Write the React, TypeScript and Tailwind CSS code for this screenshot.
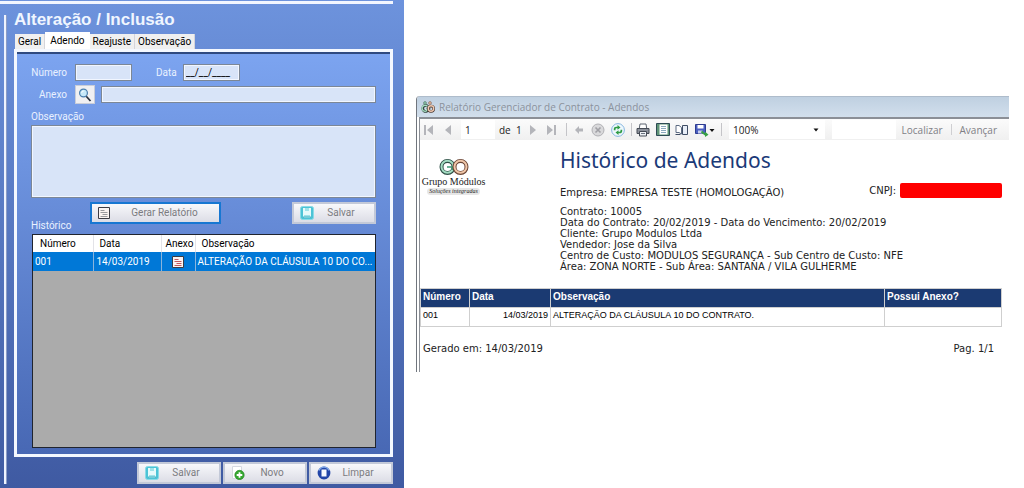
import type { ReactNode } from 'react';

const tabs = ['Geral', 'Adendo', 'Reajuste', 'Observação'];

const contractLines = [
  'Contrato: 10005',
  'Data do Contrato: 20/02/2019 - Data do Vencimento: 20/02/2019',
  'Cliente: Grupo Modulos Ltda',
  'Vendedor: Jose da Silva',
  'Centro de Custo: MODULOS SEGURANÇA - Sub Centro de Custo: NFE',
  'Área: ZONA NORTE - Sub Área: SANTANA / VILA GULHERME',
];

const SaveIcon = () => (
  <svg viewBox="0 0 14 14" className="size-3.5">
    <rect x="0.5" y="0.5" width="13" height="13" rx="2" fill="#4cc3d6" stroke="#8adbe6" />
    <path d="M3 2h8v9H3z" fill="#e6fafb" />
    <path d="M5 2h4v3H5zM4 9h6v3H4z" fill="#9fe3ea" />
    <path d="M3 11h8" stroke="#4fb4c6" />
  </svg>
);

const NewIcon = () => (
  <svg viewBox="0 0 14 14" className="size-3.5">
    <path d="M1.5 0.5h9v12h-9z" fill="#fff" stroke="#d5d8e0" />
    <circle cx="8.5" cy="9" r="4.7" fill="#35a82f" stroke="#1d7d1c" strokeWidth="0.6" />
    <path d="M8.5 6.2v5.6M5.7 9h5.6" stroke="#fff" strokeWidth="1.8" />
  </svg>
);

const ClearIcon = () => (
  <svg viewBox="0 0 14 14" className="size-3.5">
    <circle cx="7" cy="7" r="5.2" fill="#2346a8" stroke="#2346a8" strokeWidth="2.4" />
    <path d="M2 4.500a5.4 5.4 0 0 1 10 0" fill="none" stroke="#7fa8e8" strokeWidth="1.4" />
    <path d="M4.5 3.500h5v7h-5z" fill="#f7faff" />
  </svg>
);

const NoteIcon = ({ color }: { color: string }) => (
  <svg viewBox="0 0 12 12" className="size-3">
    <path d="M0.5 0.5h11v11H0.5z" fill="#fbf4f2" stroke="#3c3c44" />
    <path d="M2.5 3.5h4M2.5 5.5h7M4.5 7.5h5M2.5 9.5h7" stroke={color} />
  </svg>
);

const SearchIcon = () => (
  <svg viewBox="0 0 14 14" className="size-3.5">
    <path d="M8 8l4.5 5" stroke="#2b3340" strokeWidth="1.8" />
    <circle cx="5.5" cy="5" r="3.9" fill="#c6e9fa" stroke="#4b7fae" strokeWidth="1.2" />
    <path d="M3.7 4.8a2 2 0 0 1 2-1.8" fill="none" stroke="#fff" />
  </svg>
);

const Rings = () => (
  <svg viewBox="0 0 30 18" className="h-[18px] w-[30px]">
    <circle cx="8.5" cy="9" r="6" fill="none" stroke="#2f4f46" strokeWidth="4" />
    <circle cx="8.5" cy="8.8" r="6" fill="none" stroke="#a3dcc2" strokeWidth="2" />
    <path d="M8 9h5.500v3" fill="none" stroke="#3f9a74" strokeWidth="1.6" />
    <circle cx="21.5" cy="9" r="6" fill="none" stroke="#6b4636" strokeWidth="4" />
    <circle cx="21.5" cy="8.8" r="6" fill="none" stroke="#f0c6a8" strokeWidth="2" />
  </svg>
);

const WindowIcon = () => (
  <svg viewBox="0 0 14 12" className="h-3 w-3.5">
    <path d="M7 5.500a3 3 0 1 0 .3 3.500H5" fill="none" stroke="#33453f" strokeWidth="2.800" />
    <path d="M6.500 5.500a3 3 0 1 0 .3 3H5" fill="none" stroke="#a5dcc0" strokeWidth="1.400" />
    <circle cx="10" cy="7.800" r="2.700" fill="none" stroke="#4a3830" strokeWidth="2.600" />
    <circle cx="10" cy="7.500" r="2.700" fill="none" stroke="#f0c8b0" strokeWidth="1.400" />
    <circle cx="4" cy="2" r="1.400" fill="#8fcdb0" stroke="#4d6b60" strokeWidth="0.600" />
    <circle cx="9" cy="2" r="1.400" fill="#ecc0a4" stroke="#75594b" strokeWidth="0.600" />
  </svg>
);

type ActionButtonProps = { icon: ReactNode; label: string; className?: string };

const ActionButton = ({ icon, label, className = 'w-[84px] border-2 border-[#c3c9d8] pr-1.5' }: ActionButtonProps) => (
  <button
    type="button"
    className={`flex h-[22px] items-center bg-gradient-to-b from-[#f8f8fb] to-[#dcdde6] pl-1.5 text-[#7b7b80] ${className}`}
  >
    {icon}
    <span className="flex-1 text-center">{label}</span>
  </button>
);

const fieldClass = 'border border-[#7c8796] bg-[#d8e4f8] outline-1 -outline-offset-2 outline-[#f1f6ff]';

const AddendumForm = () => (
  <section className="flex min-w-0 flex-col bg-gradient-to-b from-[#6d93dd] to-[#3f5aa2] font-[Roboto,sans-serif] text-[10px] leading-[14px] text-[#e9f1ff]">
    <div className="mt-px mr-[11px] h-[3px] bg-[#f2f6ff]" />
    <div className="flex flex-1 pb-1">
      <div className="mt-[11px] ml-1 w-[3px] shrink-0 border-r border-[#8c9cc4] bg-[#eef3ff]" />
      <div className="flex min-w-0 flex-1 flex-col pr-[11px] pl-[7px]">
        <h1 className="mt-1.5 font-['Liberation_Sans',sans-serif] text-[17px] leading-5 font-bold text-[#f0f6ff]">
          Alteração / Inclusão
        </h1>

        <div role="tablist" className="mt-0.5 ml-px flex items-end text-black">
          {tabs.map((tab) => (
            <button
              key={tab}
              type="button"
              role="tab"
              aria-selected={tab === 'Adendo'}
              className={
                tab === 'Adendo'
                  ? 'h-[17px] bg-white px-[5px]'
                  : 'h-[15px] border-r border-[#d5d5da] bg-[#f0f0f0] px-[3px]'
              }
            >
              {tab}
            </button>
          ))}
        </div>

        <div className="flex flex-1 flex-col border-[3px] border-[#f4f8ff]">
          <div className="flex flex-1 flex-col border-t-2 border-[#2f4a80] bg-gradient-to-b from-[#7ca4f0] to-[#4868b4] px-[14px] pt-2.5 pb-1.5">
            <div className="flex items-center">
              <label htmlFor="numero" className="w-9 text-right">Número</label>
              <input id="numero" className={`ml-2 h-[17px] w-[57px] ${fieldClass}`} />
              <label htmlFor="data" className="ml-6">Data</label>
              <input
                id="data"
                defaultValue="__/__/____"
                className={`ml-1.5 h-[17px] w-[57px] pl-0.5 text-black ${fieldClass}`}
              />
            </div>

            <div className="mt-1 flex items-center">
              <label htmlFor="anexo" className="w-9 text-right">Anexo</label>
              <button
                type="button"
                aria-label="Procurar anexo"
                className="ml-2 flex h-[19px] w-5 items-center justify-center border border-[#c9cdd8] bg-[#f0f0f2]"
              >
                <SearchIcon />
              </button>
              <input id="anexo" className={`ml-1.5 h-[17px] min-w-0 flex-1 ${fieldClass}`} />
            </div>

            <label htmlFor="observacao" className="mt-1.5">Observação</label>
            <textarea id="observacao" className={`mt-px h-[73px] resize-none ${fieldClass}`} />

            <div className="mt-1 flex h-[31px] items-start">
              <h2 className="w-[59px] self-end">Histórico</h2>
              <ActionButton
                icon={<NoteIcon color="#9a9a9e" />}
                label="Gerar Relatório"
                className="w-[131px] border-2 border-[#1777d2]"
              />
              <div className="ml-auto">
                <ActionButton icon={<SaveIcon />} label="Salvar" />
              </div>
            </div>

            <div className="mt-px ml-px flex-1 border border-[#20242e] bg-[#ababab]">
              <table className="w-full table-fixed border-collapse text-left">
                <colgroup>
                  <col className="w-[60px]" />
                  <col className="w-[68px]" />
                  <col className="w-[34px]" />
                  <col />
                </colgroup>
                <thead>
                  <tr className="h-[17px] bg-white text-black">
                    <th className="border-r border-[#e3e3e8] pl-[7px] font-normal">Número</th>
                    <th className="border-r border-[#e3e3e8] pl-1.5 font-normal">Data</th>
                    <th className="border-r border-[#e3e3e8] pl-1 font-normal">Anexo</th>
                    <th className="pl-1.5 font-normal">Observação</th>
                  </tr>
                </thead>
                <tbody>
                  <tr className="h-[19px] bg-[#0078d7] text-white">
                    <td className="border-r border-[#8ab4dc] pl-0.5">001</td>
                    <td className="border-r border-[#8ab4dc] pl-[3px]">14/03/2019</td>
                    <td className="border-r border-[#8ab4dc]">
                      <div className="flex justify-center"><NoteIcon color="#c4585c" /></div>
                    </td>
                    <td className="pl-0.5 whitespace-nowrap">ALTERAÇÃO DA CLÁUSULA 10 DO CO...</td>
                  </tr>
                </tbody>
              </table>
            </div>
          </div>
        </div>

        <div className="mt-[5px] flex justify-end gap-0.5">
          <ActionButton icon={<SaveIcon />} label="Salvar" />
          <ActionButton icon={<NewIcon />} label="Novo" />
          <ActionButton icon={<ClearIcon />} label="Limpar" />
        </div>
      </div>
    </div>
  </section>
);

const navIcons = {
  first: 'M1 1h2v10H1zM10 1v10L4 6z',
  prev: 'M8 1v10L2 6z',
  next: 'M3 1v10l6-5z',
  last: 'M1 1v10l6-5zM8 1h2v10H8z',
  back: 'M2 6l4-4v2.5h4v3H6V10z',
};

const NavButton = ({ label, icon, className }: { label: string; icon: keyof typeof navIcons; className: string }) => (
  <button type="button" aria-label={label} className={className}>
    <svg viewBox="0 0 12 12" className="size-3">
      <path d={navIcons[icon]} fill="#b4b5ba" />
    </svg>
  </button>
);

const ReportToolbar = () => (
  <div className="flex h-[21px] items-center bg-gradient-to-b from-[#fbfbfb] to-[#f0f0f0] pl-[3px] font-['Open_Sans',sans-serif] text-[10px] leading-[14px] text-[#222]">
    <NavButton label="Primeira página" icon="first" className="" />
    <NavButton label="Página anterior" icon="prev" className="ml-2" />
    <input aria-label="Página" defaultValue="1" className="ml-1.5 h-[19px] w-[34px] bg-white pl-1" />
    <span className="ml-1 w-[24px] whitespace-nowrap">de&nbsp; 1</span>
    <NavButton label="Próxima página" icon="next" className="ml-1" />
    <NavButton label="Última página" icon="last" className="ml-[7px]" />
    <span className="ml-2 h-[13px] w-px bg-[#c4c4c8]" />
    <NavButton label="Voltar" icon="back" className="ml-1.5" />
    <button type="button" aria-label="Parar" className="ml-1.5">
      <svg viewBox="0 0 14 14" className="size-3.5">
        <circle cx="7" cy="7" r="6" fill="#d9d9db" stroke="#b0b0b4" />
        <path d="M4.5 4.5l5 5M9.5 4.5l-5 5" stroke="#a0a0a5" strokeWidth="1.6" />
      </svg>
    </button>
    <button type="button" aria-label="Atualizar" className="ml-1.5">
      <svg viewBox="0 0 14 14" className="size-3.5">
        <circle cx="7" cy="7" r="6.4" fill="#eef7fd" stroke="#86b6df" />
        <path d="M2.800 7.200V6c0-1.500 1-2.300 2.400-2.300h1.300V2l3 2.400-3 2.400V5.300H5.400c-.6 0-.9.300-.9.900v1z" fill="#2f9c45" />
        <path d="M11.200 6.800V8c0 1.500-1 2.300-2.400 2.300H7.500V12l-3-2.400 3-2.400v1.500h1.100c.6 0 .9-.3.900-.9v-1z" fill="#2f9c45" />
      </svg>
    </button>
    <span className="ml-1.5 h-[13px] w-px bg-[#c4c4c8]" />
    <button type="button" aria-label="Imprimir" className="ml-1">
      <svg viewBox="0 0 14 14" className="size-3.5">
        <path d="M4 1h6l.8 5H3.200z" fill="#fff" stroke="#5c6470" />
        <path d="M1 5.500h12v5H1z" fill="#8c919b" stroke="#454b55" />
        <path d="M3.500 8.500h7v4.500h-7z" fill="#eef1f5" stroke="#454b55" />
        <path d="M5 10.500h4" stroke="#68717e" />
      </svg>
    </button>
    <button type="button" aria-label="Layout de impressão" className="ml-1.5">
      <svg viewBox="0 0 14 13" className="h-[13px] w-3.5">
        <path d="M0.500 0.500h13v12H0.500z" fill="#5f9477" stroke="#2d4a54" />
        <path d="M3.500 1.500h8v10h-8z" fill="#fff" />
        <path d="M5 3.500h5M5 5.500h5M5 7.500h5M5 9.500h5" stroke="#8aa9bd" />
      </svg>
    </button>
    <button type="button" aria-label="Configurar página" className="ml-[5px]">
      <svg viewBox="0 0 14 12" className="h-3 w-3.5">
        <path d="M1 1.500h3l2.500 2v6.500L4 8.500H1z" fill="#fff" stroke="#5c6b82" />
        <path d="M7.500 1.500h5v9h-5z" fill="#e8eef7" stroke="#3f4d64" />
        <path d="M0.500 10.500h5" stroke="#3f4d64" />
      </svg>
    </button>
    <button type="button" aria-label="Exportar" className="ml-1.5">
      <svg viewBox="0 0 20 14" className="h-3.5 w-5">
        <path d="M0.500 1.500h10v9h-10z" fill="#4b5fc0" stroke="#2e3c90" />
        <path d="M2.500 2h6v3.500h-6z" fill="#fff" />
        <path d="M3 7.500h4.500v3H3z" fill="#c8cfee" />
        <path d="M7 7.500l3 3V8.500l3.500 3.200-3.500 2.300v-1.500L6 9.500z" fill="#37a043" />
        <path d="M14.500 6h5L17 9z" fill="#111" />
      </svg>
    </button>
    <span className="ml-1.5 h-[13px] w-px bg-[#c4c4c8]" />
    <div className="relative ml-[7px] w-[96px]">
      <select aria-label="Zoom" className="h-[19px] w-full appearance-none bg-white pl-1">
        <option>100%</option>
      </select>
      <svg viewBox="0 0 6 4" className="pointer-events-none absolute top-2 right-1.5 h-1 w-1.5">
        <path d="M0.500 0.500h5L3 3.500z" fill="#111" />
      </svg>
    </div>
    <input aria-label="Texto a localizar" className="ml-[7px] h-[19px] w-[64px] min-w-0 bg-white" />
    <button type="button" className="ml-auto text-[#808086]">Localizar</button>
    <span className="mx-2 h-[11px] w-px bg-[#cfcfd2]" />
    <button type="button" className="mr-3 text-[#808086]">Avançar</button>
  </div>
);

const cell = 'border border-[#cfcfcf] px-0.5 pt-0.5 align-top';

const ReportWindow = () => (
  <section className="mt-24 mr-[15px] ml-3 min-w-0 self-start overflow-hidden rounded-tl-sm border-l border-[#70757d]">
    <div className="flex h-[21px] items-center gap-1 border-t border-[#aebccb] bg-gradient-to-b from-[#bfd0e1] to-[#d2dfec] pl-1 font-['Open_Sans',sans-serif] text-[10px] text-[#8b929c]">
      <WindowIcon />
      <h2>Relatório Gerenciador de Contrato - Adendos</h2>
    </div>
    <div className="ml-0.5 border-t-2 border-l border-[#8b8f96] bg-white font-['DejaVu_Sans',sans-serif] text-[10px] leading-[11px] text-[#222]">
      <ReportToolbar />
      <div className="flex pt-2">
        <div className="mt-2.5 ml-px flex w-[65px] shrink-0 flex-col items-center whitespace-nowrap">
          <Rings />
          <span className="font-['Liberation_Serif',serif] text-[10px] leading-[12px] text-[#222]">Grupo Módulos</span>
          <span className="rounded-sm bg-[#e6e6e6] px-0.5 font-['Liberation_Serif',serif] text-[6px] leading-[7px] italic">Soluções integradas</span>
        </div>
        <div className="ml-[74px] min-w-0 flex-1">
          <h1 className="font-['Noto_Sans',sans-serif] text-[21px] leading-6 text-[#1b3a78]">Histórico de Adendos</h1>
          <div className="mt-[11px] flex h-[15px] items-center pr-[7px]">
            <span className="pt-1">Empresa: EMPRESA TESTE (HOMOLOGAÇÃO)</span>
            <span className="ml-auto">CNPJ:</span>
            <span className="ml-1 h-full w-[102px] rounded-xs bg-[#ff0000]" />
          </div>
          <div className="mt-2 whitespace-nowrap">
            {contractLines.map((line) => (
              <p key={line}>{line}</p>
            ))}
          </div>
        </div>
      </div>

      <div className="mt-4 pr-[7px]">
        <table className="w-full table-fixed border-collapse text-left font-['Liberation_Sans',sans-serif] text-[9px] text-black">
          <colgroup>
            <col className="w-[49px]" />
            <col className="w-[81px]" />
            <col />
            <col className="w-[117px]" />
          </colgroup>
          <thead>
            <tr className="h-[19px] bg-[#1b3a72] text-[10px] text-white">
              <th className={cell}>Número</th>
              <th className={cell}>Data</th>
              <th className={cell}>Observação</th>
              <th className={cell}>Possui Anexo?</th>
            </tr>
          </thead>
          <tbody>
            <tr className="h-[19px]">
              <td className={cell}>001</td>
              <td className={`text-right ${cell}`}>14/03/2019</td>
              <td className={cell}>ALTERAÇÃO DA CLÁUSULA 10 DO CONTRATO.</td>
              <td className={cell} />
            </tr>
          </tbody>
        </table>
      </div>
      <div className="mt-4 flex justify-between pr-[15px] pb-[18px] pl-[3px]">
        <span>Gerado em: 14/03/2019</span>
        <span>Pag. 1/1</span>
      </div>
    </div>
  </section>
);

export default function App() {
  return (
    <main className="grid min-h-screen grid-cols-[404fr_620fr] bg-white">
      <AddendumForm />
      <ReportWindow />
    </main>
  );
}
